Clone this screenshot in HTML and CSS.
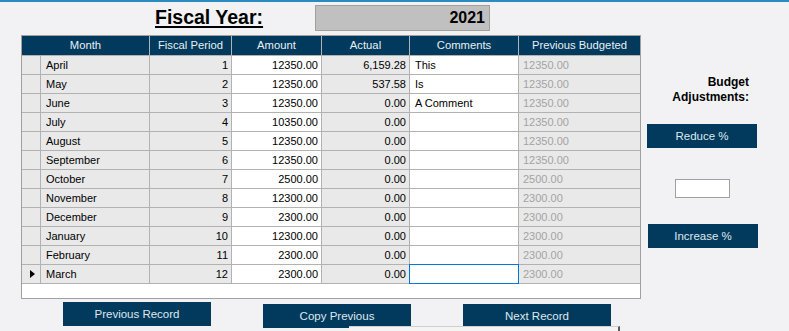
FILE: index.html
```html
<!DOCTYPE html>
<html>
<head>
    <meta charset="UTF-8">
    <title>Budget Entry</title>
    <link rel="stylesheet" href="styles.css">
</head>
<body>
    <div class="title-row">
        <div class="title">Fiscal Year:</div>
        <div class="year-box">2021</div>
    </div>

    <div class="main">
        <div class="grid">
            <div class="hd month-hd">Month</div>
            <div class="hd">Fiscal Period</div>
            <div class="hd">Amount</div>
            <div class="hd">Actual</div>
            <div class="hd">Comments</div>
            <div class="hd">Previous Budgeted</div>

            <div class="sel"></div><div class="c txt">April</div><div class="c num">1</div><div class="c num edit">12350.00</div><div class="c num">6,159.28</div><div class="c txt edit">This</div><div class="c prev">12350.00</div>
            <div class="sel"></div><div class="c txt">May</div><div class="c num">2</div><div class="c num edit">12350.00</div><div class="c num">537.58</div><div class="c txt edit">Is</div><div class="c prev">12350.00</div>
            <div class="sel"></div><div class="c txt">June</div><div class="c num">3</div><div class="c num edit">12350.00</div><div class="c num">0.00</div><div class="c txt edit">A Comment</div><div class="c prev">12350.00</div>
            <div class="sel"></div><div class="c txt">July</div><div class="c num">4</div><div class="c num edit">10350.00</div><div class="c num">0.00</div><div class="c txt edit"></div><div class="c prev">12350.00</div>
            <div class="sel"></div><div class="c txt">August</div><div class="c num">5</div><div class="c num edit">12350.00</div><div class="c num">0.00</div><div class="c txt edit"></div><div class="c prev">12350.00</div>
            <div class="sel"></div><div class="c txt">September</div><div class="c num">6</div><div class="c num edit">12350.00</div><div class="c num">0.00</div><div class="c txt edit"></div><div class="c prev">12350.00</div>
            <div class="sel"></div><div class="c txt">October</div><div class="c num">7</div><div class="c num edit">2500.00</div><div class="c num">0.00</div><div class="c txt edit"></div><div class="c prev">2500.00</div>
            <div class="sel"></div><div class="c txt">November</div><div class="c num">8</div><div class="c num edit">12300.00</div><div class="c num">0.00</div><div class="c txt edit"></div><div class="c prev">2300.00</div>
            <div class="sel"></div><div class="c txt">December</div><div class="c num">9</div><div class="c num edit">2300.00</div><div class="c num">0.00</div><div class="c txt edit"></div><div class="c prev">2300.00</div>
            <div class="sel"></div><div class="c txt">January</div><div class="c num">10</div><div class="c num edit">12300.00</div><div class="c num">0.00</div><div class="c txt edit"></div><div class="c prev">2300.00</div>
            <div class="sel"></div><div class="c txt">February</div><div class="c num">11</div><div class="c num edit">2300.00</div><div class="c num">0.00</div><div class="c txt edit"></div><div class="c prev">2300.00</div>
            <div class="sel current"></div><div class="c txt">March</div><div class="c num">12</div><div class="c num edit">2300.00</div><div class="c num">0.00</div><div class="c txt edit focus"></div><div class="c prev">2300.00</div>

            <div class="filler"></div>
        </div>

        <div class="side">
            <div class="side-label">Budget<br>Adjustments:</div>
            <button class="btn reduce-btn">Reduce %</button>
            <input class="pct-input" type="text">
            <button class="btn increase-btn">Increase %</button>
        </div>
    </div>

    <div class="nav-row">
        <button class="btn nav-btn prev-btn">Previous Record</button>
        <button class="btn nav-btn">Copy Previous</button>
        <button class="btn nav-btn">Next Record</button>
    </div>

    <!-- dropdown edge peeking in at the bottom -->
    <div class="popup-edge"></div>
</body>
</html>
```

FILE: styles.css
```css
body {
    margin: 0;
    height: 329px;
    overflow: hidden;
    background: #f2f2f4;
    border-top: 2px solid #2b8bbf;
    font-family: "Liberation Sans", Arial, sans-serif;
    color: #000;
    position: relative;
}

/* Title */
.title-row {
    display: flex;
    padding-left: 155px;
    margin-top: 3px;
    height: 26px;
}

.title {
    width: 160px;
    font-size: 19.5px;
    font-weight: bold;
    line-height: 24px;
    text-decoration: underline;
    text-decoration-thickness: 2px;
    text-underline-offset: 2px;
}

.year-box {
    box-sizing: border-box;
    width: 175px;
    height: 26px;
    background: #c0c0c0;
    border: 1px solid #a0a0a0;
    font-size: 16px;
    font-weight: bold;
    line-height: 24px;
    text-align: right;
    padding-right: 4px;
}

/* Main area */
.main {
    display: flex;
    margin-top: 4px;
    padding-left: 21px;
}

.grid {
    display: grid;
    grid-template-columns: 18px 108px 81px 89px 87px 108px 121px;
    grid-template-rows: 19px repeat(12, 18px) 14px;
    gap: 1px;
    background: #b2b2b2;
    border: 1px solid #a0a0a0;
    font-size: 11px;
}

.hd {
    background: #013a5c;
    color: #e8eff4;
    font-size: 11.25px;
    line-height: 19px;
    text-align: center;
    white-space: nowrap;
}

.month-hd {
    grid-column: span 2;
}

.sel {
    background: #e9e9e9;
    position: relative;
}

.sel.current::after {
    content: "";
    position: absolute;
    left: 8px;
    top: 5px;
    border-left: 5px solid #000;
    border-top: 4px solid transparent;
    border-bottom: 4px solid transparent;
}

.c {
    background: #e9e9e9;
    line-height: 18px;
    white-space: nowrap;
    overflow: hidden;
}

.c.edit {
    background: #fff;
}

.txt {
    padding-left: 5px;
}

.num {
    text-align: right;
    padding-right: 3px;
}

.prev {
    color: #a3a3a3;
    padding-left: 4px;
}

.focus {
    outline: 1px solid #0078d7;
    position: relative;
}

.filler {
    grid-column: 1 / -1;
    background: #fff;
}

/* Side panel */
.side {
    width: 148px;
    display: flex;
    flex-direction: column;
}

.side-label {
    margin-top: 40px;
    padding-right: 40px;
    text-align: right;
    font-size: 12px;
    font-weight: bold;
    line-height: 15px;
}

.btn {
    border: none;
    background: #013a5c;
    color: #dfe8ee;
    font-family: inherit;
    font-size: 11.5px;
    padding: 0;
    cursor: pointer;
}

.reduce-btn,
.increase-btn {
    width: 110px;
    height: 24px;
}

.reduce-btn {
    margin: 19px 0 0 6px;
}

.pct-input {
    box-sizing: border-box;
    width: 55px;
    height: 19px;
    margin: 31px 0 0 34px;
    border: 1px solid #a0a0a0;
    background: #fff;
    padding: 0;
}

.increase-btn {
    margin: 26px 0 0 7px;
}

/* Record navigation */
.nav-row {
    display: flex;
    align-items: flex-start;
    gap: 52px;
    padding-left: 63px;
}

.nav-btn {
    width: 148px;
    height: 24px;
    margin-top: 5px;
}

.nav-btn.prev-btn {
    margin-top: 3px;
}

.popup-edge {
    position: absolute;
    left: 349px;
    top: 324px;
    width: 269px;
    height: 10px;
    background: #f4f4f4;
    border-top: 1px solid #cfcfcf;
    border-right: 2px solid #5a5a5a;
}
```
